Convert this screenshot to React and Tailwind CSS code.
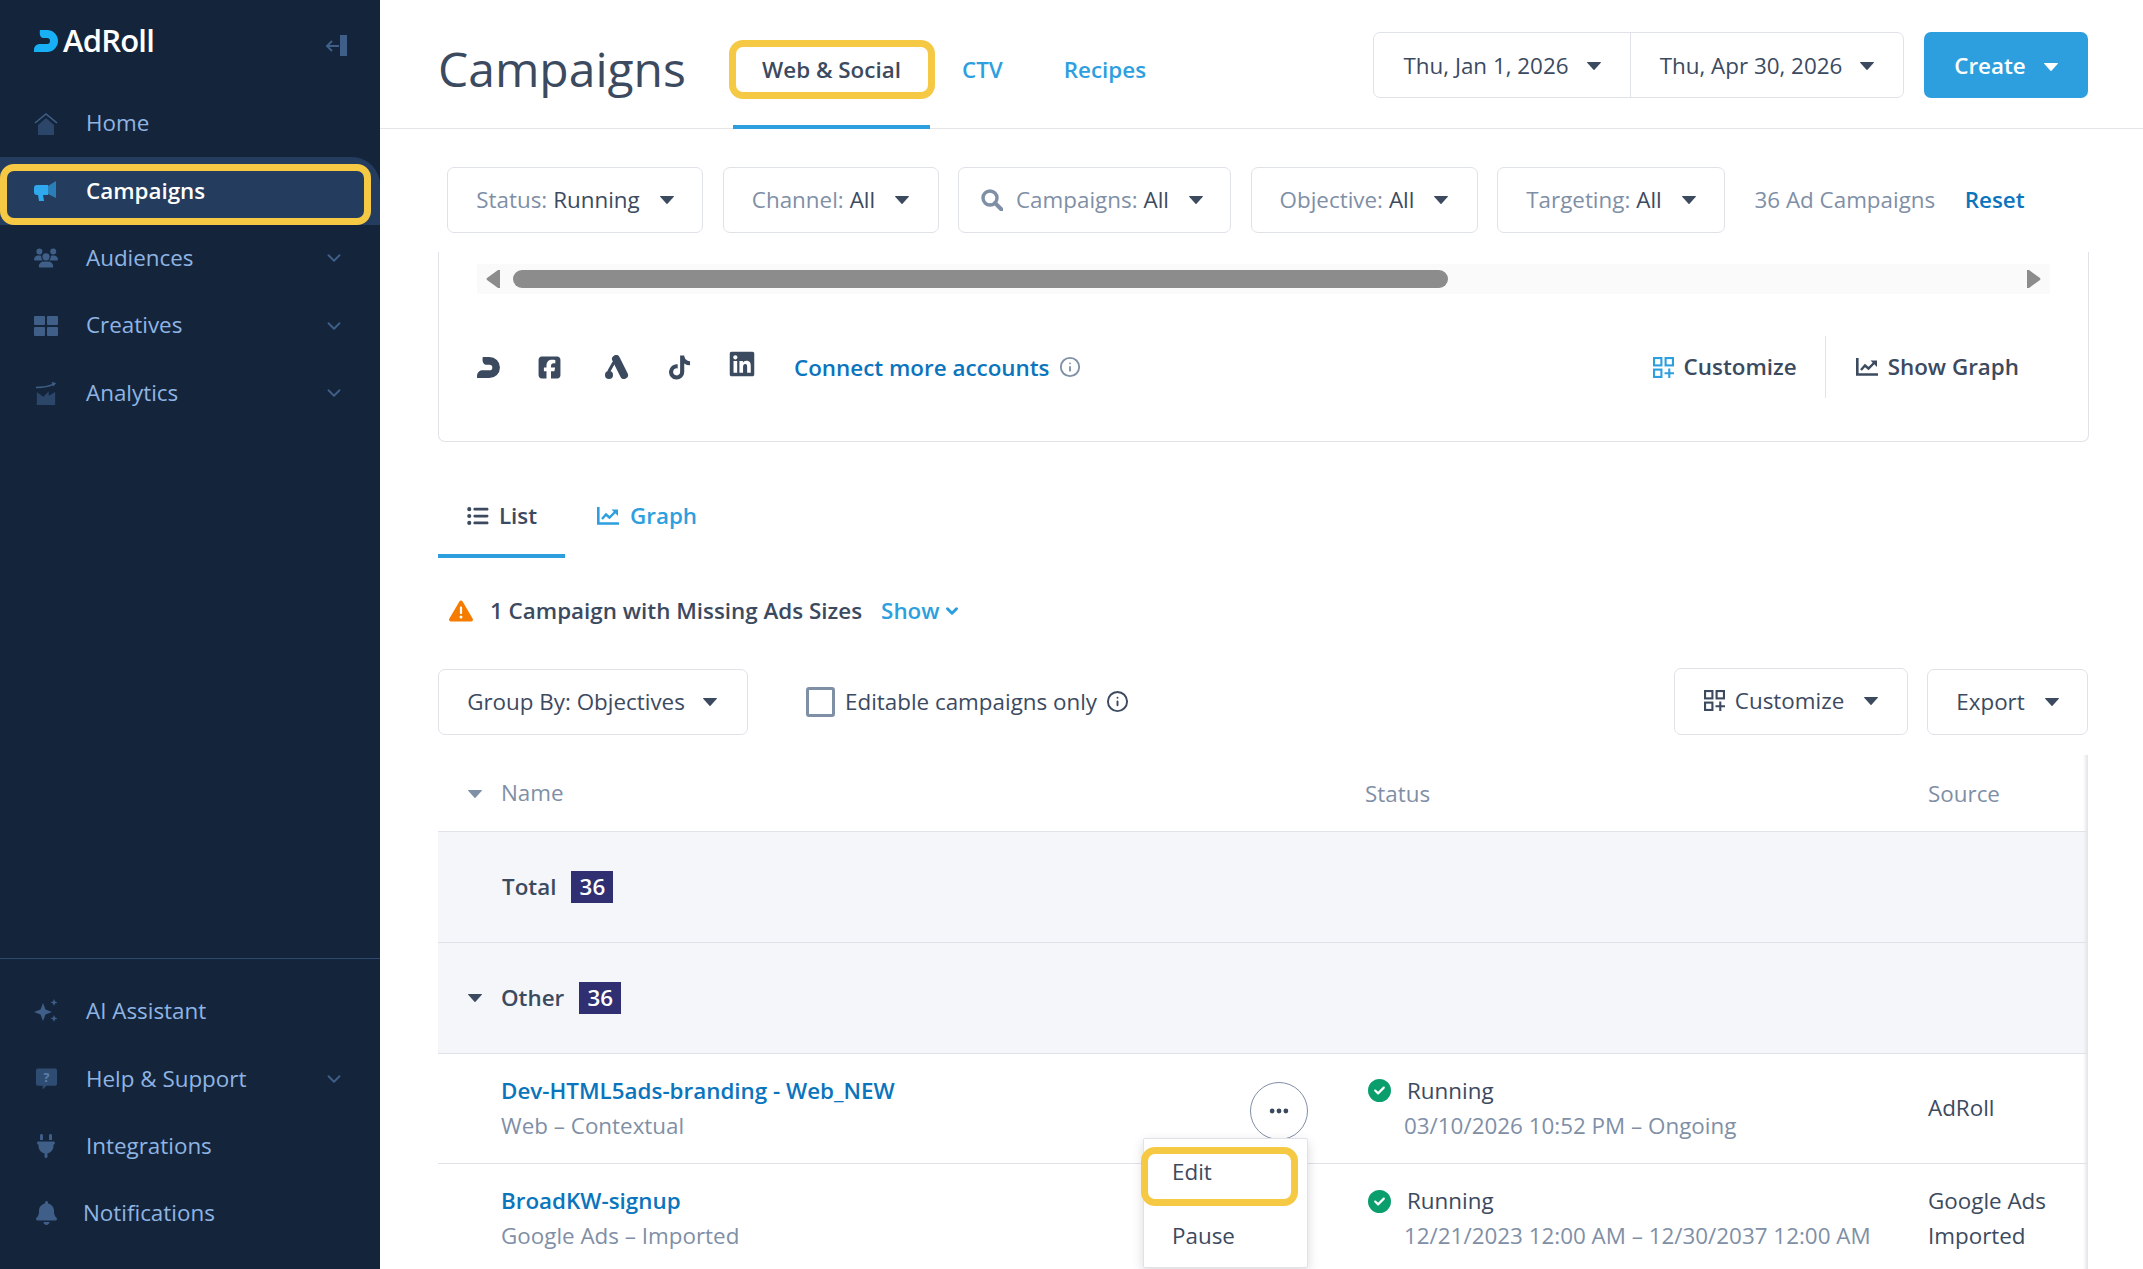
import React from "react";
import { FaUsers, FaBell, FaPlug, FaSquareFacebook, FaLinkedin, FaTiktok, FaListUl, FaTriangleExclamation, FaEllipsis, FaCircleCheck } from "react-icons/fa6";
import { ChevronDown, Info } from "lucide-react";

const Caret = ({ className = "text-[#3c4a5f]" }) => (
  <svg viewBox="0 0 14 8" className={`w-[14px] h-[8px] shrink-0 ${className}`}><path d="M0.500 0h13a0.500 0.500 0 0 1 0.300 0.800L7.500 7.700a0.700 0.700 0 0 1-1 0L0.200 0.800A0.500 0.500 0 0 1 0.500 0z" fill="currentColor" /></svg>
);
const Logo = ({ className }) => (
  <svg viewBox="0 0 24 22" className={className}><path d="M6 0H13A11 11 0 0 1 13 22H0V20C0 16 3 14 6 14H13A3 3 0 0 0 13 8H9C7 8 5 5 6 0Z" fill="currentColor" /></svg>
);
const Spark = () => (
  <svg viewBox="0 0 24 24" className="w-[24px] h-[24px] text-[#3f5f88]"><path d="M9 4l2.500 6.500L18 13l-6.500 2.500L9 22l-2.500-6.500L0 13l6.500-2.500z M20 0l1 2.500L23.500 3.500 21 4.500 20 7l-1-2.500L16.500 3.500 19 2.500z M20 16l1 2.500 2.500 1-2.500 1L20 23l-1-2.500-2.500-1 2.500-1z" fill="currentColor" /></svg>
);
const Help = () => (
  <svg viewBox="0 0 24 24" className="w-[23px] h-[24px] text-[#2f4c72]"><path d="M3 1h18a2 2 0 0 1 2 2v14a2 2 0 0 1-2 2h-9l-4 4v-4H3a2 2 0 0 1-2-2V3a2 2 0 0 1 2-2z" fill="currentColor" /><text x="12" y="15" textAnchor="middle" fontSize="13" fontWeight="700" fill="#5c80ad" fontFamily="Open Sans">?</text></svg>
);
const Analytics = () => (
  <svg viewBox="0 0 24 26" className="w-[22px] h-[24px]"><path d="M1 7c7 0 14-1 20-4" stroke="#3f5f88" strokeWidth="1.500" fill="none" /><path d="M18 1l5 1-3 4z" fill="#3f5f88" /><path d="M2 26V12l7 5 6-6v5l7-4v14z" fill="#2b4668" /></svg>
);
const House = () => (
  <svg viewBox="0 0 24 22" className="w-[24px] h-[22px]"><path d="M1 10L12 1l11 9" stroke="#3f5f88" strokeWidth="1.500" fill="none" /><path d="M12 5l8 7v10H4V12z" fill="#2b4668" /></svg>
);
const Grid = () => (
  <svg viewBox="0 0 24 20" className="w-[24px] h-[20px]"><rect width="11" height="9" rx="1" fill="#3f5f88" /><rect x="13" width="11" height="9" rx="1" fill="#3f5f88" /><rect y="11" width="11" height="9" rx="1" fill="#3f5f88" /><rect x="13" y="11" width="11" height="9" rx="1" fill="#3f5f88" /></svg>
);
const Megaphone = () => (
  <svg viewBox="0 0 24 22" className="w-[24px] h-[22px]"><path d="M14 6l8-5v17l-8-4z" fill="#2b7fb8" /><path d="M3 5h11v10H9l1 6H5l-1-6H3a3 3 0 0 1-3-3V8a3 3 0 0 1 3-3z" fill="#30a8ee" /></svg>
);
const AdWords = () => (
  <svg viewBox="0 0 25 24" className="w-[25px] h-[24px] shrink-0 text-[#3c4a5f]" fill="none" stroke="currentColor" strokeLinecap="round"><path d="M12 4L20 20" strokeWidth="8" /><path d="M9.500 8L5 16" strokeWidth="3" /><circle cx="5" cy="20" r="4" fill="currentColor" stroke="none" /></svg>
);
const ChartIcon = ({ className }) => (
  <svg viewBox="0 0 22 18" className={className} fill="none" stroke="currentColor"><path d="M1.300 0v16.500H22" strokeWidth="2.600" /><path d="M5 12l4-4.500 3.500 3L18 5" strokeWidth="2.400" /><path d="M14.500 2.500H21V9z" fill="currentColor" stroke="none" /></svg>
);
const CustomizeIcon = ({ className }) => (
  <svg viewBox="0 0 20 20" className={className} fill="none" stroke="currentColor" strokeWidth="2"><rect x="1" y="1" width="7" height="7" /><rect x="12" y="1" width="7" height="7" /><rect x="1" y="12" width="7" height="7" /><path d="M15.500 11v9M11 15.500h9" /></svg>
);
const Search = () => (
  <svg viewBox="0 0 22 22" className="w-[22px] h-[22px] mr-[13px] text-[#7f8fa6]" fill="none" stroke="currentColor"><circle cx="9" cy="9" r="7" strokeWidth="3.400" /><path d="M14 14l6.500 6.500" strokeWidth="4" strokeLinecap="round" /></svg>
);

const NavItem = ({ icon, label, chevron, active, xText = "pl-[28px]" }) => (
  <div className={`relative flex items-center h-[67.300px] pl-[34px] pr-[35px] ${active ? "bg-[#243c5d] text-white font-semibold rounded-tr-[28px]" : "text-[#8fb4e3]"}`}>
    <span className="w-[24px] flex justify-center shrink-0">{icon}</span>
    <span className={`${xText} flex-1 text-[22.400px] leading-none`}>{label}</span>
    {chevron && <ChevronDown className="w-[22px] h-[22px] text-[#3f5f88]" strokeWidth={2} />}
    {active && <span className="absolute left-0 right-[9px] top-[7px] bottom-0 border-[7px] border-[#f6c945] rounded-[14px]" />}
  </div>
);

const Filter = ({ w, label, value, search }) => (
  <div className={`${w} h-[66px] shrink-0 flex items-center justify-center gap-[20px] border border-[#dfe2e8] rounded-[7px] text-[22.400px] ${search ? "pr-[5px]" : ""}`}>
    <span className="flex items-center">
      {search && <Search />}
      <span className="text-[#7f8fa6]">{label}</span>
      {value && <span className="text-[#3c4a5f] ml-[6px]">{value}</span>}
    </span>
    <Caret />
  </div>
);

const Row = ({ name, sub, range, source, source2, menu }) => (
  <div className="relative h-[110.500px] flex border-b border-[#dfe2e8] text-[22.400px]">
    <div className="w-[927px] shrink-0 pl-[63px] pt-[19px]">
      <div className="text-[#0a74bd] font-semibold leading-[36px]">{name}</div>
      <div className="text-[#7f8fa6] leading-[34px]">{sub}</div>
    </div>
    <div className="w-[563px] shrink-0 pl-[3px] pt-[19px]">
      <div className="flex items-center text-[#3c4a5f] leading-[36px]"><FaCircleCheck className="w-[23px] h-[23px] text-[#0b9e6d] mr-[16px] shrink-0" />Running</div>
      <div className="text-[#7f8fa6] leading-[34px] pl-[36px] whitespace-nowrap">{range}</div>
    </div>
    <div className="text-[#3c4a5f] leading-[35px] self-center whitespace-nowrap -mt-[2px]">{source}{source2 && <div>{source2}</div>}</div>
    {menu && (
      <div className="absolute left-[812px] top-[28px] w-[58px] h-[58px] rounded-full border border-[#7f8fa6] bg-white flex items-center justify-center text-[#3c4a5f]"><FaEllipsis className="w-[22px] h-[22px]" /></div>
    )}
  </div>
);

export default function App() {
  return (
    <div className="relative flex h-[1269px] w-[2143px] overflow-hidden bg-white" style={{ fontFamily: '"Open Sans", sans-serif' }}>
      <aside className="w-[380px] shrink-0 bg-[#14253b] flex flex-col">
        <div className="h-[90px] flex items-start pl-[34px] pr-[33px] pt-[28px]">
          <Logo className="w-[24px] h-[22px] text-[#18b0f5] mt-[2px]" />
          <span className="ml-[5px] text-white text-[31px] font-semibold leading-[24px] tracking-[-0.800px] flex-1">AdRoll</span>
          <span className="flex items-center mt-[7px] text-[#3f5f88]">
            <svg viewBox="0 0 14 12" className="w-[14px] h-[12px]" fill="none" stroke="currentColor" strokeWidth="2"><path d="M14 6H2M7 1L2 6l5 5" /></svg>
            <span className="w-[7px] h-[21px] bg-[#3f5f88] ml-[1px]" />
          </span>
        </div>
        <NavItem icon={<House />} label="Home" />
        <NavItem icon={<Megaphone />} label="Campaigns" active />
        <NavItem icon={<FaUsers className="w-[24px] h-[20px] text-[#3f5f88]" />} label="Audiences" chevron />
        <NavItem icon={<Grid />} label="Creatives" chevron />
        <NavItem icon={<Analytics />} label="Analytics" chevron />
        <div className="flex-1" />
        <div className="border-t border-[#2e4a6e] pt-[19px] pb-[22px]">
          <NavItem icon={<Spark />} label="AI Assistant" />
          <NavItem icon={<Help />} label="Help &amp; Support" chevron />
          <NavItem icon={<FaPlug className="w-[20px] h-[24px] text-[#3f5f88]" />} label="Integrations" />
          <NavItem icon={<FaBell className="w-[21px] h-[24px] text-[#3f5f88]" />} label="Notifications" xText="pl-[25px]" />
        </div>
      </aside>

      <main className="flex-1 min-w-0 flex flex-col">
        <header className="relative h-[129px] shrink-0 border-b border-[#e3e5e9] flex items-start pl-[58px] pr-[55px]">
          <h1 className="text-[48px] leading-none text-[#3c4a5f] mt-[45px] w-[295px] shrink-0 font-normal">Campaigns</h1>
          <div className="relative w-[197px] h-[129px] shrink-0 flex justify-center text-[22.400px] font-semibold text-[#3c4a5f] pt-[55px] leading-[30px] border-b-[4px] border-[#2d9fde]">
            Web &amp; Social
            <span className="absolute -left-[4px] -right-[5px] top-[40px] h-[59px] border-[7px] border-[#f6c945] rounded-[14px]" />
          </div>
          <span className="ml-[32px] text-[22.400px] font-semibold text-[#2d9fde] pt-[55px] leading-[30px]">CTV</span>
          <span className="ml-[61px] text-[22.400px] font-semibold text-[#2d9fde] pt-[55px] leading-[30px]">Recipes</span>
          <div className="flex-1" />
          <div className="mt-[32px] h-[66px] w-[531px] flex border border-[#dfe2e8] rounded-[7px] text-[22.400px] text-[#3c4a5f]">
            <div className="w-[257px] pt-[1px] flex items-center justify-center gap-[18px] border-r border-[#dfe2e8]">Thu, Jan 1, 2026 <Caret /></div>
            <div className="flex-1 pt-[1px] flex items-center justify-center gap-[18px]">Thu, Apr 30, 2026 <Caret /></div>
          </div>
          <div className="mt-[32px] ml-[20px] h-[66px] w-[164px] pt-[1px] rounded-[7px] bg-[#2d9fde] text-white text-[22.400px] font-semibold flex items-center justify-center gap-[18px]">Create <Caret className="text-white mt-[3px]" /></div>
        </header>

        <div className="h-[123px] shrink-0 flex items-start pl-[67px] pt-[38px] gap-[19.500px]">
          <Filter w="w-[256px]" label="Status:" value="Running" />
          <Filter w="w-[216px]" label="Channel:" value="All" />
          <Filter w="w-[273px]" label="Campaigns:" value="All" search />
          <Filter w="w-[227px]" label="Objective:" value="All" />
          <Filter w="w-[228px]" label="Targeting:" value="All" />
          <span className="ml-[10px] h-[66px] flex items-center text-[22.400px] text-[#7f8fa6] whitespace-nowrap">36 Ad Campaigns</span>
          <span className="ml-[10px] h-[66px] flex items-center text-[22.400px] font-semibold text-[#0a74bd]">Reset</span>
        </div>

        <section className="ml-[58px] mr-[54px] h-[190px] shrink-0 border-x border-b border-[#dfe2e8] rounded-b-[7px] flex flex-col">
          <div className="mx-[38px] mt-[12px] h-[30px] bg-[#fafafa] flex items-center px-[9px] text-[#8c8c8c]">
            <svg viewBox="0 0 14 18" className="w-[14px] h-[18px] shrink-0"><path d="M14 1v16a1 1 0 0 1-2 1L1 10a1.500 1.500 0 0 1 0-2l11-8a1 1 0 0 1 2 1z" fill="currentColor" /></svg>
            <span className="ml-[13px] w-[935px] h-[18px] rounded-full bg-[#8c8c8c]" />
            <span className="flex-1" />
            <svg viewBox="0 0 14 18" className="w-[14px] h-[18px] shrink-0"><path d="M0 1v16a1 1 0 0 0 2 1l11-8a1.500 1.500 0 0 0 0-2L2 0a1 1 0 0 0-2 1z" fill="currentColor" /></svg>
          </div>
          <div className="flex items-center h-[62px] mt-[42px] pl-[38px] pr-[69px] text-[#3c4a5f]">
            <Logo className="w-[23px] h-[21px] text-[#3c4a5f] shrink-0" />
            <FaSquareFacebook className="w-[23px] h-[25px] ml-[38px] shrink-0" />
            <span className="ml-[43px] flex"><AdWords /></span>
            <FaTiktok className="w-[21px] h-[25px] ml-[40px] shrink-0" />
            <FaLinkedin className="w-[26px] h-[28px] ml-[39px] -mt-[6px] shrink-0" />
            <span className="ml-[39px] pt-[1px] text-[22.400px] font-semibold text-[#0a74bd] whitespace-nowrap">Connect more accounts</span>
            <Info className="w-[22px] h-[22px] ml-[9px] text-[#7f8fa6]" />
            <span className="flex-1" />
            <CustomizeIcon className="w-[21px] h-[21px] text-[#2d9fde]" />
            <span className="ml-[10px] text-[22.400px] font-semibold whitespace-nowrap">Customize</span>
            <span className="ml-[28px] h-[62px] border-r border-[#dfe2e8] rounded-r-[6px] w-[1px]" />
            <ChartIcon className="ml-[30px] w-[22px] h-[18px]" />
            <span className="ml-[10px] text-[22.400px] font-semibold whitespace-nowrap">Show Graph</span>
          </div>
        </section>

        <div className="ml-[58px] mr-[54px] flex h-[116px] shrink-0 items-end text-[22.400px] font-semibold">
          <div className="w-[127px] h-[62px] pt-[5px] flex items-start justify-center gap-[10px] border-b-[4px] border-[#2d9fde] text-[#3c4a5f] leading-[30px]"><FaListUl className="w-[23px] h-[22px] mt-[4px]" />List</div>
          <div className="ml-[32px] h-[62px] pt-[5px] flex items-start gap-[11px] text-[#2d9fde] leading-[30px]"><ChartIcon className="w-[22px] h-[18px] mt-[6px]" />Graph</div>
        </div>

        <div className="ml-[68px] mt-[36px] flex items-center h-[34px] shrink-0 text-[22.400px]">
          <FaTriangleExclamation className="w-[26px] h-[24px] text-[#f57c00]" />
          <span className="ml-[16px] font-semibold text-[#3c4a5f] whitespace-nowrap">1 Campaign with Missing Ads Sizes</span>
          <span className="ml-[19px] font-semibold text-[#2d9fde]">Show</span>
          <ChevronDown className="w-[18px] h-[18px] text-[#2d9fde] ml-[3px]" strokeWidth={4} />
        </div>

        <div className="ml-[58px] mr-[55px] mt-[40px] flex items-center h-[67px] shrink-0 text-[22.400px] text-[#3c4a5f]">
          <div className="w-[310px] h-[66px] pt-[1px] pr-[2px] border border-[#dfe2e8] rounded-[7px] flex items-center justify-center gap-[18px]">Group By: Objectives <Caret /></div>
          <span className="ml-[58px] w-[29px] h-[30px] border-[3px] border-[#7f8fa6] rounded-[3px]" />
          <span className="ml-[10px] pt-[1px] whitespace-nowrap">Editable campaigns only</span>
          <Info className="w-[23px] h-[23px] ml-[9px]" />
          <span className="flex-1" />
          <div className="w-[234px] h-[67px] border border-[#dfe2e8] rounded-[7px] flex items-center justify-center pb-[2px]">
            <CustomizeIcon className="w-[21px] h-[21px]" />
            <span className="ml-[10px]">Customize</span>
            <Caret className="text-[#3c4a5f] ml-[20px]" />
          </div>
          <div className="ml-[19px] w-[161px] h-[66px] pt-[1px] border border-[#dfe2e8] rounded-[7px] flex items-center justify-center gap-[20px]">Export <Caret /></div>
        </div>

        <div className="relative ml-[58px] mr-[55px] flex-1 min-h-0">
          <div className="h-[97px] flex items-end pb-[20px] border-b border-[#dfe2e8] text-[22.400px] text-[#7f8fa6]">
            <div className="w-[927px] pl-[30px] flex items-center -mt-[1px] mb-[1px]"><Caret className="text-[#7f8fa6]" /><span className="ml-[19px] -mt-[2px]">Name</span></div>
            <div className="w-[563px]">Status</div>
            <div>Source</div>
          </div>
          <div className="h-[111px] bg-[#f4f6fa] border-b border-[#dfe2e8] flex items-center pl-[64px] text-[22.400px] font-semibold text-[#3c4a5f]">
            Total
            <span className="ml-[15px] w-[42px] h-[32px] bg-[#2f2f72] text-white flex items-center justify-center">36</span>
          </div>
          <div className="h-[110.500px] bg-[#f4f6fa] border-b border-[#dfe2e8] flex items-center pl-[30px] text-[22.400px] font-semibold text-[#3c4a5f]">
            <Caret />
            <span className="ml-[19px]">Other</span>
            <span className="ml-[15px] w-[42px] h-[32px] bg-[#2f2f72] text-white flex items-center justify-center">36</span>
          </div>
          <Row name="Dev-HTML5ads-branding - Web_NEW" sub="Web – Contextual" range="03/10/2026 10:52 PM – Ongoing" source="AdRoll" menu />
          <Row name="BroadKW-signup" sub="Google Ads – Imported" range="12/21/2023 12:00 AM – 12/30/2037 12:00 AM" source="Google Ads" source2="Imported" />

          <span className="absolute right-0 top-[20px] bottom-0 w-[5px] bg-gradient-to-r from-transparent to-[#e2e4e9]" />

          <div className="absolute left-[705px] top-[403px] w-[165px] h-[130px] bg-white border border-[#dfe2e8] rounded-[2px] shadow-[0_4px_12px_rgba(0,0,0,0.15)] text-[22.400px] text-[#3c4a5f]">
            <div className="pl-[28px] pt-[17px] leading-[32px] h-[65px]">Edit</div>
            <div className="pl-[28px] pt-[16px] leading-[32px]">Pause</div>
            <span className="absolute -left-[3px] w-[157px] top-[8px] h-[59px] border-[7px] border-[#f6c945] rounded-[14px]" />
          </div>
        </div>
      </main>
    </div>
  );
}
